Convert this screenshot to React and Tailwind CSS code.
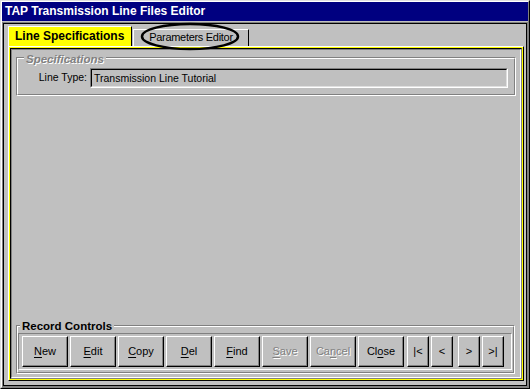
import React from 'react';

const raised =
  'border border-t-white border-l-white border-r-black border-b-black shadow-[inset_-1px_-1px_0_#808080]';

const Btn = ({ children, w = 'w-[46px]', disabled, className = '' }) => (
  <div
    className={`${w} h-full flex items-center justify-center text-[11px] ${raised} ${className} ${
      disabled ? 'text-[#808080] [text-shadow:1px_1px_0_#fff]' : 'text-black'
    }`}
  >
    {children}
  </div>
);

const U = ({ children }) => <span className="underline underline-offset-[2px]">{children}</span>;

const GroupBox = ({ label, labelClass, children, className = '' }) => (
  <div className={`relative border border-t-[#808080] border-l-[#808080] border-r-white border-b-white ${className}`}>
    <div className="border border-t-white border-l-white border-r-[#808080] border-b-[#808080]">
      {children}
    </div>
    <span className={`absolute bg-[#c0c0c0] px-[2px] leading-[14px] ${labelClass}`}>{label}</span>
  </div>
);

export default function App() {
  return (
    <div className="relative w-[530px] h-[389px] bg-[#c0c0c0] font-['Liberation_Sans',Arial,sans-serif] text-black border border-t-[#dfdfdf] border-l-[#dfdfdf] border-r-black border-b-black">
      <div className="h-full flex flex-col border border-t-white border-l-white border-r-[#808080] border-b-[#808080]">
        {/* Title bar */}
        <div className="h-[19px] bg-[#000080] text-white font-bold text-[12px] leading-[19px] pl-[3px]">
          TAP Transmission Line Files Editor
        </div>

        <div className="mt-px flex-1 flex flex-col border border-[#808080]">
          <div className="flex-1 flex flex-col border border-black pl-[4px] pr-[2px] pt-[2px] pb-[4px]">
            {/* Tabs */}
            <div className="flex items-end">
              <div className="w-[124px] h-[20px] bg-[#ffff00] border-t border-l border-r border-t-white border-l-white border-r-black font-bold text-[12px] leading-[18px] pl-[6px]">
                Line Specifications
              </div>
              <div className="ml-px w-[116px] h-[17px] border-t border-l border-r border-t-white border-l-white border-r-black text-[11px] tracking-[-0.3px] leading-[15px] text-center">
                Parameters Editor
              </div>
            </div>

            {/* Tab page */}
            <div className="flex-1 flex flex-col border border-t-white border-l-white border-r-black border-b-black">
              <div className="flex-1 flex flex-col border border-[#ffff00]">
                <div className="flex-1 flex flex-col border border-t-black border-l-black border-r-[#808080] border-b-[#808080]">
                  <div className="flex-1 flex flex-col border border-t-[#808080] border-l-[#808080] border-r-white border-b-white pl-[4px] pr-[4px] pt-[7px] pb-[3px]">
                    <GroupBox
                      label="Specifications"
                      labelClass="-top-[6px] left-[7px] text-[11.5px] font-bold italic text-[#808080] [text-shadow:1px_1px_0_#fff]"
                    >
                      <div className="flex items-center pt-[9px] pb-[6px] pr-[6px]">
                        <div className="w-[69px] text-right text-[10.5px]">Line Type:</div>
                        <div className="ml-[3px] flex-1 h-[20px] border border-t-[#808080] border-l-[#808080] border-r-white border-b-white">
                          <div className="h-full border border-t-black border-l-black border-r-[#dfdfdf] border-b-[#dfdfdf] pl-[2px] text-[10.5px] leading-[16px]">
                            Transmission Line Tutorial
                          </div>
                        </div>
                      </div>
                    </GroupBox>

                    <div className="flex-1" />

                    <GroupBox
                      label="Record Controls"
                      labelClass="-top-[7px] left-[3px] text-[11.5px] font-bold"
                      className="mr-px"
                    >
                      <div className="mt-[6px] mb-[2px] mr-px border border-t-[#808080] border-l-[#808080] border-r-white border-b-white">
                        <div className="h-[35px] flex pl-[3px] pt-[2px] pb-[2px] gap-[2px]">
                          <Btn><U>N</U>ew</Btn>
                          <Btn><U>E</U>dit</Btn>
                          <Btn><U>C</U>opy</Btn>
                          <Btn><U>D</U>el</Btn>
                          <Btn><U>F</U>ind</Btn>
                          <Btn disabled><U>S</U>ave</Btn>
                          <Btn disabled>Ca<U>n</U>cel</Btn>
                          <Btn>Cl<U>o</U>se</Btn>
                          <Btn w="w-[22px]" className="ml-[1px]">|&lt;</Btn>
                          <Btn w="w-[22px]">&lt;</Btn>
                          <Btn w="w-[22px]" className="ml-[3px]">&gt;</Btn>
                          <Btn w="w-[22px]">&gt;|</Btn>
                        </div>
                      </div>
                    </GroupBox>
                  </div>
                </div>
              </div>
            </div>
          </div>
        </div>
      </div>

      {/* hand-drawn annotation around the second tab */}
      <svg className="absolute left-[139px] top-[21px]" width="100" height="30" viewBox="0 0 100 30">
        <ellipse cx="50" cy="14.5" rx="48" ry="12.5" fill="none" stroke="black" strokeWidth="2.5" />
      </svg>
    </div>
  );
}
